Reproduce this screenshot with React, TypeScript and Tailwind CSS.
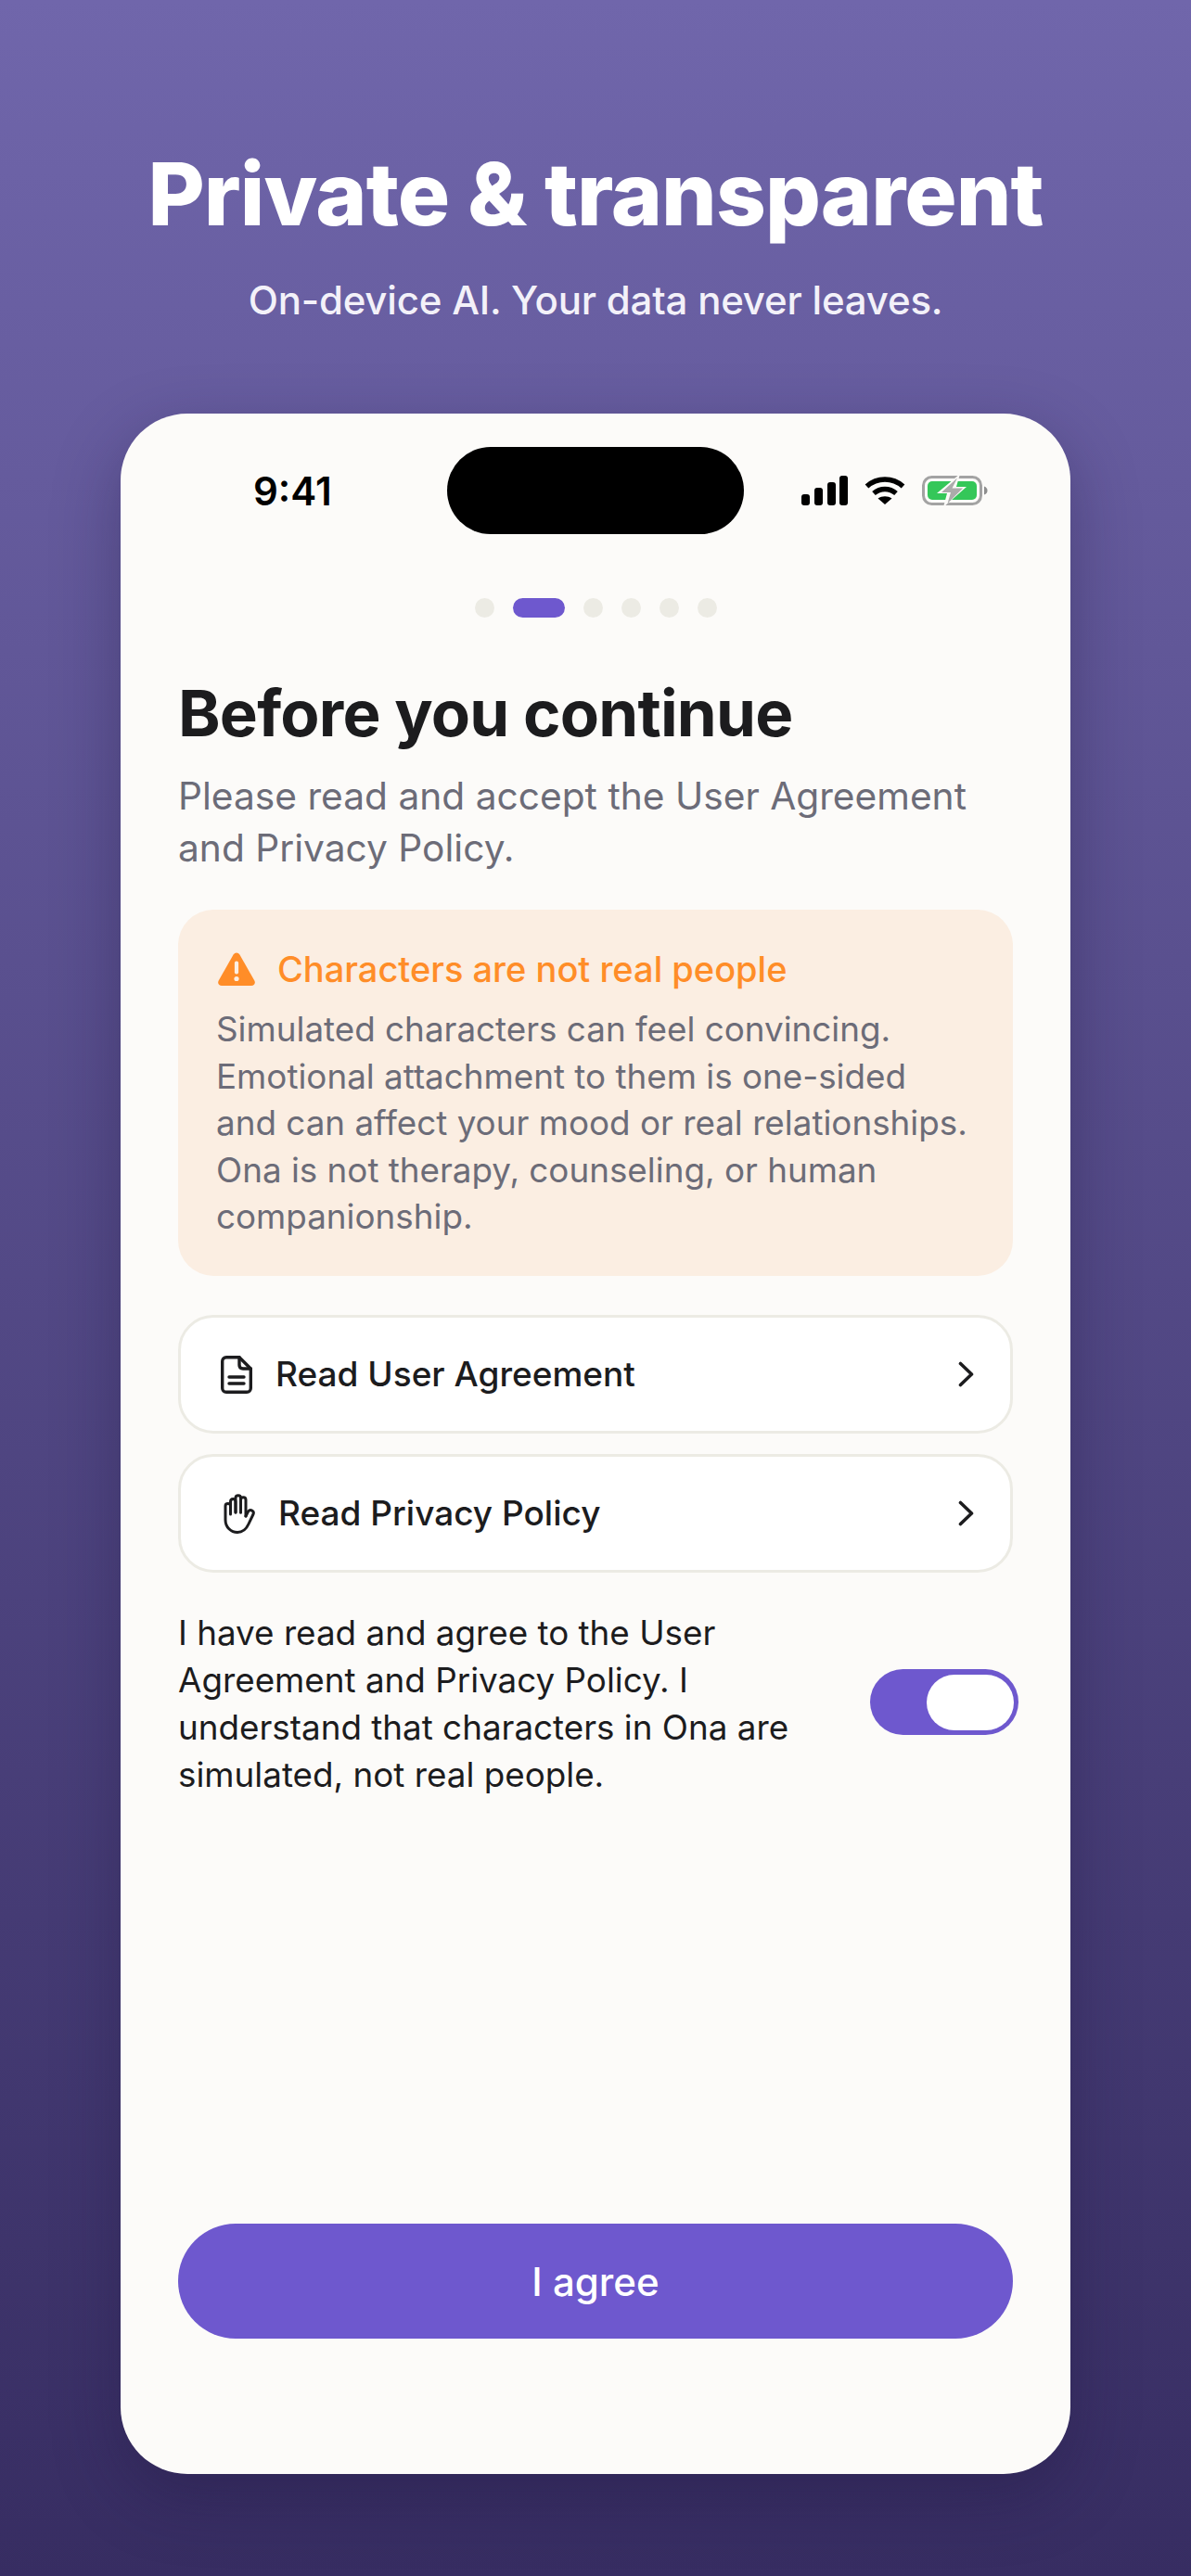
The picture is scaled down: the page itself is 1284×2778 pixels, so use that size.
import React from "react";

function Signal() {
  return (
    <svg width="50" height="32" viewBox="0 0 50 32" fill="#000">
      <rect x="0" y="20" width="9" height="12" rx="3" />
      <rect x="14" y="13" width="9" height="19" rx="3" />
      <rect x="28" y="7" width="9" height="25" rx="3" />
      <rect x="41" y="0" width="9" height="32" rx="3" />
    </svg>
  );
}

function Wifi() {
  return (
    <svg width="44" height="30" viewBox="0 0 44 30" fill="none" stroke="#000" strokeWidth="5.5">
      <path d="M2.5 10.5C13.5 0.5 30.5 0.5 41.5 10.5" />
      <path d="M10 18C17 12 27 12 34 18" />
      <path d="M22 30L14.5 23.5C19 20.5 25 20.5 29.5 23.5Z" fill="#000" stroke="none" />
    </svg>
  );
}

function Battery() {
  return (
    <svg width="71" height="34" viewBox="0 0 71 34" fill="none">
      <rect x="1.5" y="2.5" width="62" height="29" rx="9" stroke="#a3a3a3" strokeWidth="3" />
      <path d="M67 12.5C69.5 13.5 70.5 15 70.5 17C70.5 19 69.5 20.5 67 21.5Z" fill="#8e8e8e" />
      <rect x="6" y="7" width="53" height="20" rx="5" fill="#34c759" />
      <path d="M41 -1L16 20H27L23 35L48 13H37Z" fill="#fcfbf9" />
      <path d="M38 3.5L21 19H31L27.5 31L44 14.5H32.5Z" fill="#ababab" />
    </svg>
  );
}

function Warn() {
  return (
    <svg width="40" height="36" viewBox="0 0 40 36">
      <path
        d="M16.6 2.5C18.2 -0.3 21.8 -0.3 23.4 2.5L39.3 30.5C40.8 33.2 38.8 36 36 36H4C1.2 36 -0.8 33.2 0.7 30.5Z"
        fill="#ff8d28"
      />
      <rect x="17.9" y="9.5" width="4.2" height="14" rx="2" fill="#fbeee2" />
      <circle cx="20" cy="28.5" r="2.6" fill="#fbeee2" />
    </svg>
  );
}

function Doc() {
  return (
    <svg width="34" height="41" viewBox="0 0 34 41" fill="none" stroke="#1c1c1e" strokeWidth="3.4" strokeLinecap="round" strokeLinejoin="round">
      <path d="M6 1.7H20L32.3 14V35C32.3 37.5 30.5 39.3 28 39.3H6C3.5 39.3 1.7 37.5 1.7 35V6C1.7 3.5 3.5 1.7 6 1.7Z" />
      <path d="M20 1.7V10C20 12.5 21.5 14 24 14H32.3" />
      <path d="M9 23H25" />
      <path d="M9 30H25" />
    </svg>
  );
}

function HandIcon() {
  return (
    <svg width="34" height="43" viewBox="0 0 34 43" fill="none" stroke="#1c1c1e" strokeWidth="3" strokeLinecap="round" strokeLinejoin="round">
      <path d="M7.5 22V8.5C7.5 4.5 13 4.5 13 8.5V20" />
      <path d="M13 20V4.5C13 0.8 18.5 0.8 18.5 4.5V20" />
      <path d="M18.5 20V6.5C18.5 2.8 24 2.8 24 6.5V24" />
      <path d="M7.5 13C7.5 9.5 2 9.5 2 13V28C2 36 8 41.5 15 41.5C21 41.5 24.5 38 27 32.5L32 22C33.5 18.5 29 16 26.5 19L24 24" />
    </svg>
  );
}

function Chevron() {
  return (
    <svg width="17" height="28" viewBox="0 0 17 28" fill="none" stroke="#1c1c1e" strokeWidth="3.6" strokeLinecap="round" strokeLinejoin="round">
      <path d="M2.5 2.5L14.5 14L2.5 25.5" />
    </svg>
  );
}

function LinkRow({ icon, label, gap }: { icon: React.ReactNode; label: string; gap: string }) {
  return (
    <div className="flex h-[128px] items-center justify-between rounded-[38px] border-[3px] border-[#ecebe4] bg-white pl-[41px] pr-[39px]">
      <div className={`flex items-center ${gap}`}>
        {icon}
        <span className="text-[37px] font-medium text-[#1c1c1e]">{label}</span>
      </div>
      <Chevron />
    </div>
  );
}

export default function App() {
  return (
    <div
      className="flex h-[2778px] w-[1284px] flex-col items-center bg-gradient-to-b from-[#7066ab] to-[#372d62] text-white"
      style={{ fontFamily: "Inter, 'Noto Sans', sans-serif" }}
    >
      <h1 className="mt-[150px] text-[94px] leading-[118px] font-extrabold tracking-[-0.9px]">Private &amp; transparent</h1>
      <p className="mt-[26px] text-[42px] leading-[60px] font-medium tracking-[-0.2px] text-[#f3f1f9]">On-device AI. Your data never leaves.</p>

      <div className="mt-[92px] flex h-[2222px] w-[1024px] flex-col rounded-[72px] bg-[#fcfbf9] px-[62px] pb-[146px] shadow-[0_24px_70px_rgba(30,20,60,0.35)]">
        <div className="relative mt-[36px] flex h-[94px] items-center justify-center">
          <span className="absolute left-[81px] text-[42px] font-semibold text-black">9:41</span>
          <div className="h-[94px] w-[320px] rounded-[47px] bg-black" />
          <div className="absolute left-[672px] flex items-center gap-[18px]">
            <Signal />
            <Wifi />
            <Battery />
          </div>
        </div>

        <div className="mt-[69px] flex items-center justify-center gap-[20px]">
          <div className="h-[21px] w-[21px] rounded-full bg-[#ecebe4]" />
          <div className="h-[21px] w-[56px] rounded-full bg-[#6e58ce]" />
          <div className="h-[21px] w-[21px] rounded-full bg-[#ecebe4]" />
          <div className="h-[21px] w-[21px] rounded-full bg-[#ecebe4]" />
          <div className="h-[21px] w-[21px] rounded-full bg-[#ecebe4]" />
          <div className="h-[21px] w-[21px] rounded-full bg-[#ecebe4]" />
        </div>

        <h2 className="mt-[59px] text-[69px] leading-[88px] font-bold tracking-[-0.8px] text-[#1c1c1e]">Before you continue</h2>
        <p className="mt-[18px] text-[40.7px] leading-[55.5px] text-[#6c6c78]">
          Please read and accept the User Agreement
          <br />
          and Privacy Policy.
        </p>

        <div className="mt-[39px] h-[395px] rounded-[38px] bg-[#fbeee2] px-[41px] pt-[40px]">
          <div className="flex items-center gap-[24px]">
            <div className="ml-[2px] flex"><Warn /></div>
            <span className="text-[38px] leading-[48px] font-medium text-[#ff8d28]">Characters are not real people</span>
          </div>
          <p className="mt-[16px] text-[36.8px] leading-[50.5px] text-[#6c6c78]">
            Simulated characters can feel convincing.
            <br />
            Emotional attachment to them is one-sided
            <br />
            and can affect your mood or real relationships.
            <br />
            Ona is not therapy, counseling, or human
            <br />
            companionship.
          </p>
        </div>

        <div className="mt-[42px] flex flex-col gap-[22px]">
          <LinkRow icon={<div className="ml-[2px] flex"><Doc /></div>} label="Read User Agreement" gap="gap-[25px]" />
          <LinkRow icon={<div className="ml-[5px] flex"><HandIcon /></div>} label="Read Privacy Policy" gap="gap-[25px]" />
        </div>

        <div className="mt-[39px] flex items-center justify-between">
          <p className="text-[36.8px] leading-[51px] text-[#1c1c1e]">
            I have read and agree to the User
            <br />
            Agreement and Privacy Policy. I
            <br />
            understand that characters in Ona are
            <br />
            simulated, not real people.
          </p>
          <div className="mr-[-6px] mb-[3px] flex h-[71px] w-[160px] items-center justify-end rounded-full bg-[#6e58ce] pr-[5px]">
            <div className="h-[60px] w-[94px] rounded-full bg-white" />
          </div>
        </div>

        <button className="mt-auto flex h-[124px] items-center justify-center rounded-[62px] bg-[#6e58ce] text-[42px] font-medium text-white">
          I agree
        </button>
      </div>
    </div>
  );
}
